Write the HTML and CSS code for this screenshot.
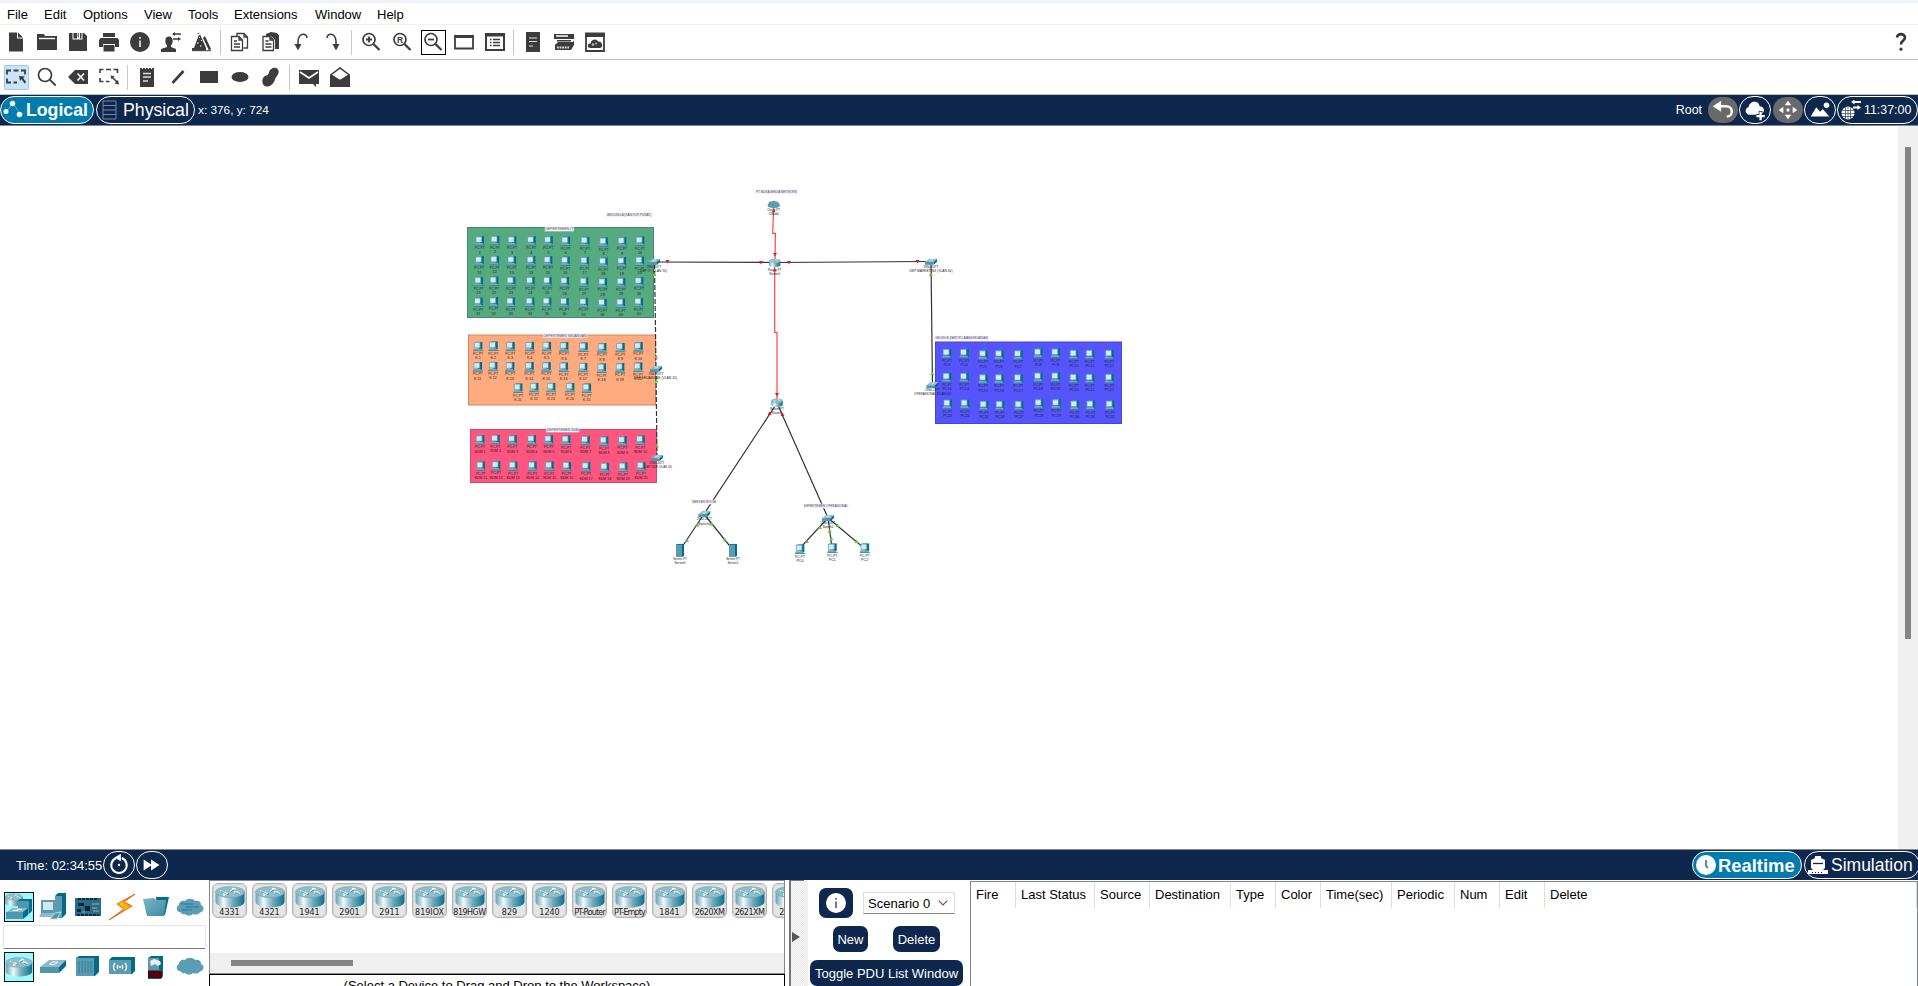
FILE: index.html
```html
<!DOCTYPE html>
<html lang="en">
<head>
<meta charset="utf-8">
<title>Packet Tracer</title>
<link rel="stylesheet" href="styles.css">
</head>
<body>
<svg class="defs" width="0" height="0">
  <defs>
    <linearGradient id="metal" x1="0" x2="1" y1="0" y2="0">
      <stop offset="0" stop-color="#5fa3b8"/><stop offset=".28" stop-color="#f2f8fa"/><stop offset=".6" stop-color="#6fa9bb"/><stop offset="1" stop-color="#0b7390"/>
    </linearGradient>
    <linearGradient id="flat" x1="0" x2="1" y1="0" y2="1">
      <stop offset="0" stop-color="#7db5c6"/><stop offset="1" stop-color="#3d8ba5"/>
    </linearGradient>
    <linearGradient id="bolt" x1="1" x2="0" y1="0" y2="1">
      <stop offset="0" stop-color="#f02a10"/><stop offset=".45" stop-color="#ffc400"/><stop offset=".6" stop-color="#ff9a00"/><stop offset="1" stop-color="#e8121a"/>
    </linearGradient>
    <symbol id="router" viewBox="0 0 30 22">
      <path d="M.5 6v10c0 3 6.500 5.500 14.500 5.500S29.500 19 29.500 16V6z" fill="url(#metal)"/>
      <ellipse cx="15" cy="6" rx="14.500" ry="5.500" fill="#8dbccb" stroke="#6ea5b7" stroke-width=".6"/>
      <path d="M5 4.500l5 2.500M8 7.500l3-.3-.8-1.800M25 7.500l-5-2M19.500 7l.2-1.700 2.800.2M15 5l4-2M17 2.300l3 .3-.6 1.500M13 7l-4 2M9 7.800l-.2 1.500 3 .2" fill="none" stroke="#fff" stroke-width="1.200"/>
      <path d="M6 5.300l5 2.500M24 8.300l-4-2M16 5.600l4-2M14 7.600l-4 2" fill="none" stroke="#1a7088" stroke-width=".6"/>
    </symbol>
    <symbol id="switch" viewBox="0 0 28 15">
      <path d="M1 8L10 1h17l-7 7z" fill="#8cbccb"/><path d="M1 8h19v6H1z" fill="#4e97ae"/><path d="M20 8l7-7v6l-7 7z" fill="#006c88"/>
      <path d="M10 5.500h6l2-2M19 3h-6l-2 2" fill="none" stroke="#fff" stroke-width="1"/>
    </symbol>
    <symbol id="cloud" viewBox="0 0 28 18">
      <path d="M5 14.500C0 14.500-.5 8.500 3 7c0-4 4-5 6-4 2-3 8-3 10 0 4-1 6 1 6 4 4 1.500 3 7-1 7.500-2 2.500-5 2.500-7 1.500-3 2.500-7 1.500-8 0-2 .5-3.500 0-4-1.500z" fill="#5b9db2"/>
    </symbol>
    <symbol id="pc" viewBox="0 0 11 10">
      <path d="M3 0h6.500v8H6z" fill="#00708a"/><path d="M1 1l1-1h5.500v6.500H1z" fill="#5a9fb4"/><path d="M1.700 1.200h5v4.600h-5z" fill="#d8e9ee"/>
      <path d="M1 7h7l1 2.200H0z" fill="#6faabd"/><path d="M0 9.200h10.500" stroke="#2c8299" stroke-width=".8"/>
    </symbol>
    <symbol id="server" viewBox="0 0 8 13"><path d="M0 1l1-1h7v12l-1 1H0z" fill="#006c88"/><path d="M0 1h6v12H0z" fill="#5a9bb2"/></symbol>
    <symbol id="lens" viewBox="0 0 20 20"><circle cx="8" cy="7.500" r="6" fill="none" stroke="#3c3c3c" stroke-width="1.700"/><path d="M12.500 12l6 6" stroke="#3c3c3c" stroke-width="2.200"/></symbol>
  </defs>
</svg>

<div class="app">
  <nav class="menu"><span>File</span><span>Edit</span><span>Options</span><span>View</span><span>Tools</span><span>Extensions</span><span>Window</span><span>Help</span></nav>

  <div class="toolbar">
    <i class="tool"><svg viewBox="0 0 20 20"><path d="M3 .5h8v6h6v13H3z"/><path d="M12 .5l5 5h-5z"/></svg></i>
    <i class="tool"><svg viewBox="0 0 20 20"><path d="M0 2h7l1 2h12v14H0z"/><path d="M2 6.500h16" stroke="#fff" stroke-width="1.400"/></svg></i>
    <i class="tool"><svg viewBox="0 0 20 20"><path d="M1 1h3.500v6.500h10V1h1.500l3 3v15H1z"/><path d="M5.500 1h3.500v5.500H5.500zM12 1h1.500v5.500H12z"/><path d="M10.300 1v4.500" stroke="#3c3c3c"/></svg></i>
    <i class="tool"><svg viewBox="0 0 20 20"><path d="M4 1h12v4H4zM1.500 6h17L20 8v7h-4v-3H4v3H0V8zM4.500 13h11v6.500h-11z"/></svg></i>
    <i class="tool"><svg viewBox="0 0 20 20"><circle cx="10" cy="10" r="10"/><path d="M10 8.500V15M10 5v1.800" stroke="#ddd" stroke-width="1.800"/></svg></i>
    <i class="tool"><svg viewBox="0 0 20 20"><ellipse cx="8" cy="9" rx="3.700" ry="4.500"/><path d="M6 12h4v3l5 2v3H0v-3l6-2zM11 2l3-2v1.200h6v1.500h-6V4zM20 7l-3-2v1.200h-5v1.500h5V9z"/></svg></i>
    <i class="tool"><svg viewBox="0 0 20 20"><path d="M7.500 1L2 16H0v2.500h14V16z"/><path d="M11 6l2-2 6 13-2 1.500z"/><path d="M4 2l4-2-.5 3zM5 11h1.500M9 8.500h1M8 14h1.500M7 5.500h1" stroke="#fff" stroke-width="1"/><path d="M0 18.700h19" stroke="#3c3c3c"/></svg></i>
    <b class="sep"></b>
    <i class="tool"><svg class="line" viewBox="0 0 20 20"><path d="M7 4V1.500h7l3.500 3.500v11h-4M14 1.500V5h3.500M1.500 4.500h7.500l3.500 3.500v10.500h-11zM9 4.500V8h3.500M4 9h3M4 12h6M4 15h6"/></svg></i>
    <i class="tool"><svg viewBox="0 0 20 20"><path d="M5 2l5-2 6 1 2 2.500V17h-4V8l-4-4H5z"/><path d="M2 4.500h7l3.500 3.500v10.500H2zM9 4.500V8h3.500M4.500 9h3M4.500 12h6M4.500 15h6" fill="none" stroke="#3c3c3c" stroke-width="1.300"/></svg></i>
    <i class="tool"><svg viewBox="0 0 20 20"><path d="M15 6c0-5-8-6-9 3v6" fill="none" stroke="#3c3c3c" stroke-width="1.500"/><path d="M2.500 12h7L6 18.500z"/></svg></i>
    <i class="tool"><svg viewBox="0 0 20 20"><path d="M4 6c0-5 8-6 9 3v6" fill="none" stroke="#3c3c3c" stroke-width="1.500"/><path d="M9.500 12h7L13 18.500z"/></svg></i>
    <b class="sep"></b>
    <i class="tool"><svg viewBox="0 0 20 20"><use href="#lens"/><path d="M5 7.500h6M8 4.500v6" stroke="#3c3c3c" stroke-width="1.800"/></svg></i>
    <i class="tool"><svg viewBox="0 0 20 20"><use href="#lens"/><text x="5" y="10.500" class="glyph">R</text></svg></i>
    <i class="tool focus"><svg viewBox="0 0 20 20"><use href="#lens"/><path d="M5 7.500h6" stroke="#3c3c3c" stroke-width="1.800"/></svg></i>
    <i class="tool"><svg viewBox="0 0 20 20"><path d="M1 5h18v11.500H1z" fill="none" stroke="#3c3c3c" stroke-width="1.800"/><path d="M0 3h20v3H0z"/></svg></i>
    <i class="tool"><svg viewBox="0 0 20 20"><path d="M1 2h18v16H1z" fill="none" stroke="#3c3c3c" stroke-width="2"/><path d="M0 1h20v3.500H0z"/><path d="M5 7.500h1.500M8 7.500h7M5 10.500h1.500M8 10.500h7M5 13.500h1.500M8 13.500h7" stroke="#3c3c3c" stroke-width="1.500"/></svg></i>
    <b class="sep"></b>
    <i class="tool"><svg viewBox="0 0 20 20"><path d="M3 0h14v20H3z"/><path d="M6 6h8M6 9.500h8M6 14h4" stroke="#ddd" stroke-width="1.200"/></svg></i>
    <i class="tool"><svg viewBox="0 0 20 20"><path d="M0 2h20v5H0zM3 8h14v1.500H3zM1 13l3-3h15l1-2v5l-3 5H1z"/><path d="M2 4h12" stroke="#fff" stroke-width="1.500"/><path d="M3 15.500h12" stroke="#ddd" stroke-width="2" stroke-dasharray="1.800 .8"/></svg></i>
    <i class="tool"><svg viewBox="0 0 20 20"><path d="M1 2h18v17H1z" fill="none" stroke="#3c3c3c" stroke-width="1.800"/><path d="M0 .5h20V5H0z"/><path d="M5 16c-4-1-2-5 .5-4.500C6 7 12 6 13 9.500c4-1 6 5.500 2 6.500z"/><circle cx="8" cy="12.500" r="1.300" fill="#bbb"/><circle cx="11" cy="11.500" r="1" fill="#bbb"/></svg></i>
    <i class="tool help"><svg viewBox="0 0 20 20"><path d="M6 5.500C6 1 14 1 14 5.500c0 3-4 3-4 7" fill="none" stroke="#333" stroke-width="2.600"/><circle cx="10" cy="17.200" r="1.600"/></svg></i>
  </div>

  <div class="toolbar">
    <i class="tool on"><svg viewBox="0 0 20 20"><path d="M1 7.500V3.500h4M7.500 3.500h5M15 3.500h4v4M1 11.500v4h4M7.500 15.500h3.500" fill="none" stroke="#3c3c3c" stroke-width="1.800"/><path d="M13 9l6 .5-1.800 1.500 3 4.300-1.700 1.200-3-4.200L14 14z"/></svg></i>
    <i class="tool"><svg viewBox="0 0 20 20"><circle cx="8" cy="8" r="6.500" fill="none" stroke="#3c3c3c" stroke-width="1.700"/><path d="M12.700 12.700l6 5.800" stroke="#3c3c3c" stroke-width="1.800"/></svg></i>
    <i class="tool"><svg viewBox="0 0 20 20"><path d="M0 10l7-7h13v14H7z"/><path d="M9.500 6.500l6.500 7M16 6.500l-6.500 7" stroke="#eee" stroke-width="1.800"/></svg></i>
    <i class="tool"><svg viewBox="0 0 20 20"><path d="M1 6V2.500h3.500M7 2.500h5M14.500 2.500h4V6M1 11v3.500h3.500M7 14.500h3.500" fill="none" stroke="#3c3c3c" stroke-width="1.600"/><path d="M12.500 9.500l5.500 5.500" stroke="#3c3c3c" stroke-width="1.600"/><path d="M11.500 8.500l4 .8-3 3zM20 17.500l-4.500-1 3.500-3.500z"/></svg></i>
    <b class="sep"></b>
    <i class="tool"><svg viewBox="0 0 20 20"><path d="M3 1h2v1h1V1h2v1h1V1h2v1h1V1h2v1h1V1h2v19H3z"/><path d="M6 6.500h8M6 10h8M6 14h5" stroke="#ddd" stroke-width="1.300"/></svg></i>
    <i class="tool"><svg viewBox="0 0 20 20"><path d="M4.500 16L15.500 4" stroke="#3c3c3c" stroke-width="2.600"/></svg></i>
    <i class="tool"><svg viewBox="0 0 20 20"><path d="M1 4h18v12H1z"/></svg></i>
    <i class="tool"><svg viewBox="0 0 20 20"><ellipse cx="10" cy="10" rx="8.500" ry="5"/></svg></i>
    <i class="tool"><svg viewBox="0 0 20 20"><path d="M8 5C9 1 15-1 17 2.500S16 9 14.500 11c-1 4-4 9-9 8.500S0 11 4 9c2-.7 3.500-1 4-4z"/></svg></i>
    <b class="sep"></b>
    <i class="tool"><svg viewBox="0 0 20 20"><path d="M0 3h20v14h-3v3l-3-3H0z"/><path d="M1 5l9 6 9-6" fill="none" stroke="#fff" stroke-width="1.700"/></svg></i>
    <i class="tool"><svg viewBox="0 0 20 20"><path d="M0 7.500L10 0l10 7.500V20H0z"/><path d="M2 7.700L10 2l8 5.700-8 5z" fill="#fff"/></svg></i>
  </div>

  <div class="bar viewbar">
    <span class="pill view active"><svg class="ico" viewBox="0 0 20 20"><path d="M3 12L10 3l7 11" fill="none" stroke="#9fd0e4" stroke-width=".6"/><circle cx="3" cy="11.500" r="2.500" fill="#fff"/><circle cx="9.500" cy="3.500" r="2.700" fill="#fff"/><circle cx="16.500" cy="14.500" r="2.800" fill="#fff"/></svg>Logical</span>
    <span class="pill view physical"><svg class="ico" viewBox="0 0 20 20"><path d="M4 1h13v18H4zM4 5.500h13M4 10h13M4 14.500h13" fill="none" stroke="#7987a3" stroke-width="1"/></svg>Physical</span>
    <span class="coords">x: 376, y: 724</span>
    <span class="root">Root</span>
    <span class="round gray"><svg viewBox="0 0 30 28"><path d="M10 10h8c9 0 8 11 1 11" fill="none" stroke="#fff" stroke-width="2.600"/><path d="M4 10l9-6v12z" fill="#fff"/></svg></span>
    <span class="round"><svg viewBox="0 0 30 28"><path d="M8 19c-5-2-3-8 0-8 1-7 11-8 12-1 7 1 5 8 1 9z" fill="#fff"/><path d="M21 15v10M16 20.500h10" stroke="#0d274d" stroke-width="4"/><path d="M21 16v9M16.500 20.500h9" stroke="#fff" stroke-width="2.500"/></svg></span>
    <span class="round gray"><svg viewBox="0 0 30 28"><path d="M15 4l3.500 5h-7zM15 24l3.500-5h-7zM5 14l5-3.500v7zM25 14l-5-3.500v7zM13.500 12.500h3v3h-3z" fill="#fff"/></svg></span>
    <span class="round"><svg viewBox="0 0 30 28"><path d="M5 21l6-10 4 5 3-3 7 8z" fill="#fff"/><circle cx="22" cy="9" r="3" fill="#fff"/></svg></span>
    <span class="pill clock"><svg class="ico" viewBox="0 0 20 20"><circle cx="7" cy="13" r="6.500" fill="#fff"/><path d="M1 10.500h12M0 13.500h14M2 16.500h10M4.500 7v12M7 6.500v13M9.500 7v12" stroke="#0d274d" stroke-width=".6"/><path d="M10 2l3.500-2.500V1.100H20v1.800h-6.500V4.500zM20 7.500L16.500 5v1.600H12v1.800h4.500V10z" fill="#fff"/></svg>11:37:00</span>
  </div>

  <main class="workspace">
    <svg id="canvas" class="canvas" width="1898" height="723" viewBox="0 126 1898 723"></svg>
    <div class="vscroll"><div class="vthumb"></div></div>
  </main>

  <div class="bar timebar">
    <span class="time">Time: 02:34:55</span>
    <span class="round"><svg viewBox="0 0 30 28"><path d="M12 6.500a8.300 8.300 0 1 0 6 0" fill="none" stroke="#fff" stroke-width="2.200"/><path d="M10 6l7-4v8z" fill="#fff"/><circle cx="15" cy="14" r="1.300" fill="#fff"/></svg></span>
    <span class="round"><svg viewBox="0 0 30 28"><path d="M6 8l9 6-9 6zM14 8l9 6-9 6z" fill="#fff"/></svg></span>
    <span class="pill mode realtime active"><svg class="ico" viewBox="0 0 20 20"><circle cx="10" cy="10" r="10" fill="#fff"/><path d="M10 5v6l2 2" fill="none" stroke="#0078ab" stroke-width="1.500"/></svg>Realtime</span>
    <span class="pill mode simulation"><svg class="ico" viewBox="0 0 20 20"><path d="M3 5l4-2V1h6v2l4 2v8l-2 2h5v4H0v-4h5l-2-2z" fill="#fff"/><path d="M5 8.500h10" stroke="#0d274d" stroke-width="1.300"/><path d="M4 17.500h12" stroke="#0d274d" stroke-width="1" stroke-dasharray="1 2"/></svg>Simulation</span>
  </div>

  <footer class="dock">
    <section class="palette">
      <div class="kinds">
        <i class="kind on"><svg viewBox="0 0 30 30"><use href="#router" x="1" y="1" width="18" height="14"/><path d="M14 9l3-2h11v12l-3 3H14z" fill="#086f8a"/><path d="M14 9h11v13H14z" fill="#4e97ae"/><path d="M3 20l5-4h16l-5 4z" fill="#8cbccb"/><path d="M2 20h17v7H2z" fill="#4e97ae"/><path d="M19 20l5-4v7l-5 4z" fill="#006c88"/><path d="M9 18.500h5M13 17.500h5" stroke="#fff"/></svg></i>
        <i class="kind"><svg viewBox="0 0 30 30"><path d="M17 4l3-3h8v21l-4 4h-7z" fill="#006c88"/><path d="M17 4h7v22h-7z" fill="#5a9bb2"/><path d="M3 8h14v13H3z" fill="#5a9bb2"/><path d="M5 10h10v8H5z" fill="#d3e7ed"/><path d="M3 21h14l2 4H1z" fill="#8cbccb"/><path d="M12 27l5-6 6-1-4 7z" fill="#4e97ae" stroke="#bcdce6"/></svg></i>
        <i class="kind"><svg viewBox="0 0 30 30"><path d="M2 6h26v18H2z" fill="#276c88"/><path d="M5 7h20M4 23h22" stroke="#0d2b3c" stroke-width="2" stroke-dasharray="3 1"/><path d="M5 11h6v3H5zM12 14h5v5h-5zM4 17h4v3H4z" fill="#0b2230"/><path d="M19 12h7M19 16h5M9 20h3M20 19h6" stroke="#b9a58a"/></svg></i>
        <i class="kind"><svg viewBox="0 0 30 30"><path d="M28 2L10 12l7 5L2 28l23-14-8-4z" fill="url(#bolt)" stroke="#ee4a16" stroke-width=".8"/></svg></i>
        <i class="kind"><svg viewBox="0 0 30 30"><path d="M15 5h13l-4 18h-8z" fill="#00708a"/><path d="M2 7l11-1 2 2h10l-2 16H6z" fill="url(#flat)"/></svg></i>
        <i class="kind"><svg viewBox="0 0 30 30"><use href="#cloud" x="1" y="5" width="28" height="20"/><path d="M6 12h12M10 15h14M6 18h11" stroke="#28788f" stroke-width="1.200"/></svg></i>
      </div>
      <div class="search"></div>
      <div class="kinds">
        <i class="kind on"><svg viewBox="0 0 30 30"><use href="#router" x="1" y="5" width="28" height="20"/></svg></i>
        <i class="kind"><svg viewBox="0 0 30 30"><use href="#switch" x="1" y="7" width="28" height="15"/></svg></i>
        <i class="kind"><svg viewBox="0 0 30 30"><path d="M3 6l3-2h20v16l-4 4H3z" fill="#006c88"/><path d="M3 6h18v18H3z" fill="#5a9bb2"/><path d="M6 9v12M9 9v12M12 9v12M15 9v12M18 9v12" stroke="#347f98"/></svg></i>
        <i class="kind"><svg viewBox="0 0 30 30"><path d="M2 8l3-3h23v14l-3 3H2z" fill="#006c88"/><path d="M2 8h22v14H2z" fill="#5a9bb2"/><path d="M8 11q-3 4 0 8M11 13q-1.500 2 0 4M18 11q3 4 0 8M15 13q1.500 2 0 4" fill="none" stroke="#fff" stroke-width="1.300"/><circle cx="13" cy="15" r="1" fill="#fff"/></svg></i>
        <i class="kind"><svg viewBox="0 0 30 30"><path d="M7 6l3-2h12v20l-2 3H7z" fill="#006c88"/><path d="M7 6h11v12H7z" fill="#5a9bb2"/><path d="M7 19h14v7H7z" fill="#5a0006"/><path d="M9 9l4-2 6 2 1 3-3 2-3-2-4 2z" fill="#eee"/></svg></i>
        <i class="kind"><svg viewBox="0 0 30 30"><use href="#cloud" x="1" y="4" width="28" height="20"/></svg></i>
      </div>
    </section>

    <section class="devices">
      <div class="models">
        <div class="model"><svg><use href="#router"/></svg><span>4331</span></div>
        <div class="model"><svg><use href="#router"/></svg><span>4321</span></div>
        <div class="model"><svg><use href="#router"/></svg><span>1941</span></div>
        <div class="model"><svg><use href="#router"/></svg><span>2901</span></div>
        <div class="model"><svg><use href="#router"/></svg><span>2911</span></div>
        <div class="model"><svg><use href="#router"/></svg><span>819IOX</span></div>
        <div class="model"><svg><use href="#router"/></svg><span class="tight">819HGW</span></div>
        <div class="model"><svg><use href="#router"/></svg><span>829</span></div>
        <div class="model"><svg><use href="#router"/></svg><span>1240</span></div>
        <div class="model"><svg><use href="#router"/></svg><span class="tighter">PT-Router</span></div>
        <div class="model"><svg><use href="#router"/></svg><span class="tighter">PT-Empty</span></div>
        <div class="model"><svg><use href="#router"/></svg><span>1841</span></div>
        <div class="model"><svg><use href="#router"/></svg><span class="tight">2620XM</span></div>
        <div class="model"><svg><use href="#router"/></svg><span class="tight">2621XM</span></div>
        <div class="model"><svg><use href="#router"/></svg><span>2811</span></div>
      </div>
      <div class="hscroll"><div class="hthumb"></div></div>
      <div class="hint">(Select a Device to Drag and Drop to the Workspace)</div>
    </section>

    <div class="splitter"><svg width="8" height="10" viewBox="0 0 8 10"><path d="M0 0l8 5-8 5z" fill="#555"/></svg></div>

    <section class="pdu">
      <div class="pdurow">
        <span class="btn info"><svg width="20" height="20" viewBox="0 0 20 20"><circle cx="10" cy="10" r="10" fill="#fff"/><path d="M10 8.500V15M10 5v1.800" stroke="#5a6d8c" stroke-width="1.800"/></svg></span>
        <span class="combo">Scenario 0<svg width="10" height="6" viewBox="0 0 10 6"><path d="M.7.700L5 5 9.300.7" fill="none" stroke="#555" stroke-width="1.100"/></svg></span>
      </div>
      <div class="pdurow second"><span class="btn new">New</span><span class="btn del">Delete</span></div>
      <span class="btn toggle">Toggle PDU List Window</span>
    </section>

    <section class="list">
      <div class="head"><span>Fire</span><span>Last Status</span><span>Source</span><span>Destination</span><span>Type</span><span>Color</span><span>Time(sec)</span><span>Periodic</span><span>Num</span><span>Edit</span><span>Delete</span></div>
    </section>
  </footer>
</div>
<script src="canvas.js"></script>
</body>
</html>
```

FILE: styles.css
```css
* { box-sizing: border-box; }
body { margin: 0; background: #fff; color: #000; font: 13px/15px "Liberation Sans", Arial, sans-serif; overflow: hidden; }
svg { display: block; }
.defs { position: absolute; }
.app { width: 1918px; height: 986px; display: flex; flex-direction: column; overflow: hidden; }

.menu { flex: none; height: 25px; border-top: 3px solid #eef3fa; border-bottom: 1px solid #f0f0f0; padding: 2px 0 0 7px; display: grid; grid-template-columns: 37px 39px 61px 44px 46px 81px 62px auto; align-items: center; }

.toolbar { flex: none; height: 35px; display: flex; align-items: center; border-bottom: 1px solid #bdbdbd; }
.tool { flex: none; width: 31px; height: 34px; padding: 7px 5px 7px 6px; font-style: normal; }
.tool svg { width: 20px; height: 20px; fill: #3c3c3c; overflow: visible; }
.tool svg.line { fill: none; stroke: #3c3c3c; stroke-width: 1.3; }
.tool.focus { width: 25px; height: 25px; margin: 0 2px 0 4px; padding: 1px; border: 1px solid #000; }
.tool.on { width: 25px; height: 25px; margin: 0 2px 0 4px; padding: 1px; border: 1px solid #99c9f5; border-radius: 2px; background: #cce4fb; }
.tool.help { margin-left: auto; margin-right: 2px; }
.glyph { font-size: 8.5px; font-weight: bold; }
.sep { flex: none; width: 7px; height: 25px; border-left: 1px solid #c8c8c8; margin-left: 3px; margin-right: -3px; }

.bar { flex: none; height: 31px; background: #0d274d; color: #fff; display: flex; align-items: center; }
.viewbar { border-bottom: 1px solid #828790; }
.pill { flex: none; height: 28px; border: 1px solid #fff; border-radius: 14px; display: flex; align-items: center; white-space: nowrap; }
.pill.active { background: #007bae; font-weight: bold; }
.ico { flex: none; width: 20px; height: 20px; }
.view { width: 94px; font-size: 17.7px; }
.view.active { padding-left: 2px; gap: 3px; }
.view.physical { width: 99px; margin-left: 2px; padding-left: 2px; gap: 4px; }
.coords { margin-left: 3px; font-size: 11.8px; }
.root { margin-left: auto; margin-right: 5px; font-size: 12.4px; }
.round { flex: none; width: 32px; height: 28px; border: 1px solid #fff; border-radius: 14px; margin-right: 1px; }
.round svg { width: 30px; height: 26px; }
.round.gray { width: 30px; height: 26px; border: 0; background: #6a6a6a; margin: 0 1px; }
.clock { width: 81px; padding-left: 3px; gap: 3px; font-size: 12.4px; }

.workspace { flex: none; height: 723px; display: flex; }
.canvas { flex: none; }
.vscroll { width: 20px; background: #f0f0f0; padding: 21px 7px 0; }
.vthumb { width: 6px; height: 492px; background: #858585; }
.canvas text { font-size: 3.7px; fill: #222; text-anchor: middle; }
.canvas .plate { fill: #f3f3fb; }
.canvas .note { fill: #4a3c60; }

.timebar { border-top: 1px solid #828790; padding-left: 16px; }
.time { width: 87px; }
.mode { font-size: 17.7px; padding-left: 3px; gap: 2px; }
.mode.realtime { width: 110px; margin-left: auto; font-size: 18.4px; }
.mode.simulation { width: 116px; margin: 0 -2px 0 2px; gap: 3px; font-size: 17.5px; }

.dock { flex: none; height: 106px; display: flex; }
.palette { width: 209px; padding: 12px 0 0 4px; }
.kinds { display: flex; gap: 4.3px; }
.kind { flex: none; width: 30px; height: 30px; }
.kind.on { background: #99fbff; outline: 1px solid #111; outline-offset: -1px; }
.search { height: 24px; width: 203px; margin: 3px 0 3px -1px; border: 1px solid #e4e4e4; border-bottom-color: #777; border-radius: 2px; }

.devices { width: 576px; display: flex; flex-direction: column; }
.models { flex: none; height: 73px; border: 1px solid #828790; border-bottom: 0; padding: 2px 0 0 2px; display: flex; gap: 5px; overflow: hidden; }
.model { flex: none; width: 35px; height: 35px; border: 1px solid #b4b4b4; border-radius: 6px; background: #e5e5e5; box-shadow: inset 0 0 0 1px #d3d3d3; padding-top: 2px; display: flex; flex-direction: column; align-items: center; font: 8px/9px "DejaVu Sans", sans-serif; color: #222; white-space: nowrap; }
.model svg { flex: none; width: 30px; height: 22px; }
.tight { letter-spacing: -.5px; }
.tighter { letter-spacing: -.85px; }
.hscroll { flex: none; height: 21px; border: 1px solid #828790; border-top: 0; background: #f0f0f0; padding: 7px 0 0 21px; }
.hthumb { width: 122px; height: 6px; background: #858585; }
.hint { flex: none; height: 30px; border: 1px solid #000; padding-top: 3px; text-align: center; }

.splitter { width: 15px; margin-left: 4px; border-left: 2px solid #777; border-top: 1px solid #777; background: repeating-conic-gradient(#eaeaea 0 25%, #fafafa 0 50%) 0 0 / 2px 2px; padding: 51px 0 0 1px; }
.pdu { width: 166px; border-left: 4px solid #f0f0f0; padding: 8px 0 0 2px; }
.pdurow { display: flex; padding-left: 9px; }
.pdurow.second { padding: 8px 0 8px 23px; gap: 25px; }
.btn { display: flex; align-items: center; justify-content: center; height: 26px; border-radius: 7px; background: #0d274d; color: #fff; white-space: nowrap; }
.info { width: 34px; height: 30px; }
.combo { width: 92px; height: 22px; margin: 4px 0 0 10px; border: 1px solid #ddd; border-bottom-color: #888; display: flex; align-items: center; justify-content: space-between; padding: 0 6px 0 4px; }
.new { width: 35px; }
.del { width: 47px; }
.toggle { width: 153px; }
.list { flex: 1; margin-top: 1px; border: 1px solid #828790; border-bottom: 0; }
.head { height: 26px; width: 946px; display: grid; grid-template-columns: 45px 79px 55px 81px 45px 45px 71px 63px 45px 45px 372px; }
.head span { border-right: 1px solid #ddd; padding: 5px 0 0 5px; white-space: nowrap; }
```

FILE: canvas.js
```js
// Draws the logical topology: zones, cables, devices and their captions.
const svg = document.getElementById('canvas');
const parts = [];
const add = s => parts.push(s);

const rect = (x, y, w, h, fill, stroke) =>
  add(`<rect x="${x}" y="${y}" width="${w}" height="${h}" fill="${fill}" stroke="${stroke}"/>`);
const text = (s, x, y, w) =>
  add(`<text x="${x}" y="${y + 1.2}"${w ? ` textLength="${w}" lengthAdjust="spacingAndGlyphs"` : ''}>${s}</text>`);
const note = (s, x, y, w) => {
  add(`<rect class="plate" x="${x - w / 2 - .5}" y="${y - 2.3}" width="${w + 1}" height="4.6"/>`);
  add(`<text class="note" x="${x}" y="${y + 1.2}" textLength="${w}" lengthAdjust="spacingAndGlyphs">${s}</text>`);
};
const cable = (pts, color = '#333', extra = '') =>
  add(`<polyline points="${pts}" fill="none" stroke="${color}" stroke-width="1.2" ${extra}/>`);
const use = (id, x, y, w, h) =>
  add(`<use href="#${id}" x="${x - w / 2}" y="${y - h / 2}" width="${w}" height="${h}"/>`);
const pc = (x, y, name) => {
  use('pc', x + .4, y, 11, 10);
  text('PC-PT', x, y + 7.2, 10);
  text(name, x, y + 11.6);
};
const mark = (x, y, color, up) =>
  add(`<path d="M${x - 2} ${y + (up ? 1.5 : -1.5)}h4l-2 ${up ? -3.4 : 3.4}z" fill="${color}"/>`);

rect(467.5, 227.5, 186, 90, '#55aa7f', '#448a66');
rect(468.5, 335, 187, 70, '#ffaa7f', '#c98a68');
rect(470.5, 429.5, 186, 53, '#ff557f', '#cc4a6a');
rect(935.5, 342, 186, 81.500, '#5555ff', '#4646c8');

cable('654,262 775,262.5 931,261.5');
cable('654.5,264 655.5,330 656,369 657,458', '#333', 'stroke-dasharray="5 2"');
cable('931,262 932.5,385');
cable('773.7,206 772.7,233.3 775.4,233.3 775,263', '#ff4545');
cable('774.7,264 774.7,332.5 777,332.5 777,402', '#ff4545');
cable('680,550 704,514 777,403 828,518 800,548');
cable('704,514 733,550');
cable('832,548 828,518 864,548');

const zone = (ox, oy, xs, ys, dy, name) => {
  let n = 0;
  ys.forEach(([y, dx]) => xs.forEach((x, c) => pc(ox + (x + dx) / 3, oy + (y + dy[c]) / 3, name(++n))));
};
const lean = [0, -1, 0, 0, 0, 1, 2, 4, 3, 1];
const cols = [59, 105, 156, 214, 265, 317, 375, 431, 486, 540];
zone(460, 210, cols, [[93, 0], [153, -1], [215, -3], [277, -4]], lean, n => n);
zone(460, 210, cols, [[410, -5], [471, -6]], lean, n => 'K ' + n);
zone(460, 210, [174, 222, 273, 330, 380], [[535, 0]], [0, -2, -2, -2, 0], n => 'K ' + (20 + n));
zone(460, 210, cols, [[690, 1]], lean, n => 'SDM ' + n);
zone(460, 210, cols, [[769, 3]], lean, n => 'SDM ' + (10 + n));
const blue = [141, 193, 250, 298, 355, 415, 467, 522, 570, 628];
zone(900, 240, blue, [[341, 0], [413, 0], [493, 2]], [0, 0, 4, 4, 4, -1, -1, 3, 3, 3], n => 'PC' + (n + 2));

note('DEPERTEMEN IT', 559.3, 229, 28);
note('DEPERTEMEN KEUANGAN', 565, 335.4, 43);
note('DEPERTEMEN SDM', 562.7, 430, 32);
note('GEDUNG A (KANTOR PUSAT)', 629, 215, 45);
note('PT NUSA MEDIA NETWORK', 776.500, 191.7, 41);
note('GEDUNG B (KANTOR CABANG/KEUANGAN)', 961.700, 338, 53);
note('SERVER ROOM', 704, 502, 24);
note('DEPERTEMEN OPERASIONAL', 826, 506, 44);

const sw = (x, y, label, w, lx = x, gap = 0) => {
  use('switch', x, y, 13, 7);
  text('2960-24TT', x, y + 5, 15);
  text(label, lx, y + 9 + gap, w);
};
sw(654, 262, 'DEP IT (VLAN 10)', 27, 653.500);
sw(656, 369, 'DEP KEUANGAN (VLAN 20)', 43, 655.5);
sw(657, 458, 'DEP SDM (VLAN 30)', 27, 658.500);
sw(931, 261.7, 'DEP MARKETING (VLAN 40)', 43);
sw(932.500, 385, 'OPERASIONAL (VLAN 50)', 37);
sw(704.300, 514, 'Switch0', 12, 704.3, 1);
sw(828, 518, 'Switch1', 11);

const router = (x, y, label) => {
  use('router', x, y, 12, 9);
  text('Router-PT', x, y + 6.5, 14);
  text(label, x, y + 10.5, 11);
};
router(774.7, 263, 'Router0');
router(777, 402.7, 'Router1');
use('cloud', 773.7, 204.500, 13, 9);
text('Cloud-PT', 773.7, 210, 13);
text('Cloud0', 773.7, 214, 10);

[[680, 'Server0'], [733, 'Server1']].forEach(([x, label]) => {
  use('server', x, 550.3, 8, 13);
  text('Server-PT', x, 559, 14);
  text(label, x, 563, 11);
});
pc(800, 549.3, 'PC0');
pc(832.3, 548.3, 'PC1');
pc(864.7, 548.3, 'PC2');

const red = '#d8202c', green = '#5cc63c';
[[667.5, 261.5], [761, 262.500], [789, 262.5], [917.5, 261.5], [775, 254.5], [777, 394.5]].forEach(p => mark(...p, red));
[[773.5, 211], [774.7, 270], [769.5, 413.5], [782.5, 414.5]].forEach(p => mark(...p, red, true));
[[654.5, 274.5], [656, 357], [656.5, 381], [657, 446], [931, 274.5], [932.3, 373.5], [697.5, 525], [687, 540.5],
 [711.5, 524], [725, 540], [820, 527.5], [807, 541.5], [829.5, 531], [831.3, 538.5], [837.5, 525.5], [856.5, 541.5]]
  .forEach(p => mark(...p, green, true));

svg.innerHTML = parts.join('');
```
